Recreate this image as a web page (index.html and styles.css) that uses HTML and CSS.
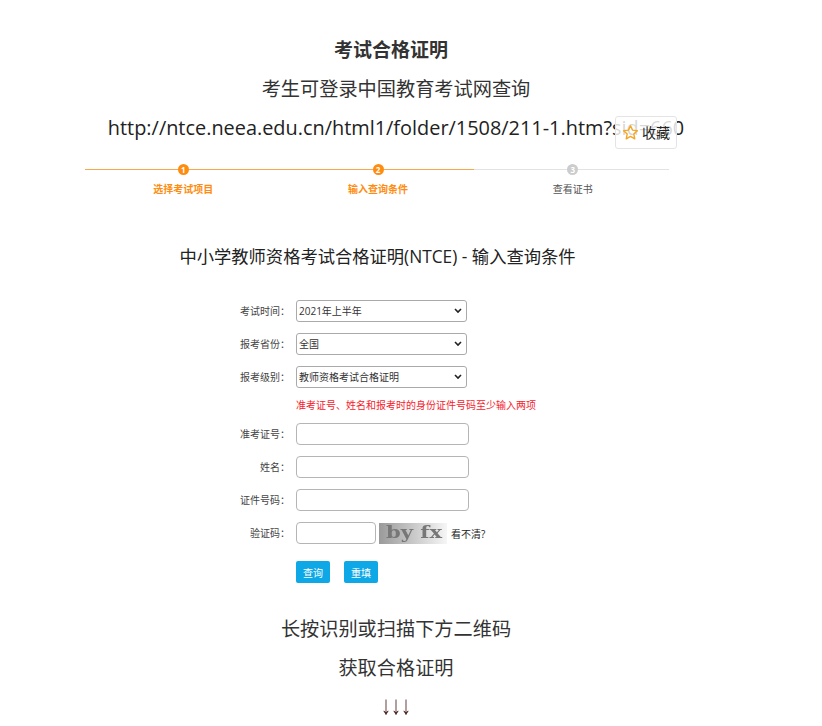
FILE: index.html
```html
<!DOCTYPE html>
<html>
 <head>
  <meta charset="utf-8">
  <title>考试合格证明</title>
  <link rel="stylesheet" href="styles.css">
 </head>
 <body>
  <div class="page">
   <h1 class="title">考试合格证明</h1>
   <p class="line sub">考生可登录中国教育考试网查询</p>
   <p class="line url">http://ntce.neea.edu.cn/html1/folder/1508/211-1.htm?sid=660</p>

   <div class="fav">
    <svg class="star" width="17" height="17" viewBox="0 0 24 24"><path d="M12 2.5l2.9 6.2 6.8.8-5 4.7 1.3 6.8-6-3.4-6 3.4 1.3-6.8-5-4.7 6.8-.8z" fill="none" stroke="#f5a623" stroke-width="2" stroke-linejoin="round"/></svg>
    <span class="fav-text">收藏</span>
   </div>

   <div class="steps">
    <div class="step done">
     <div class="dot">1</div>
     <div class="step-name">选择考试项目</div>
    </div>
    <div class="step done">
     <div class="dot">2</div>
     <div class="step-name">输入查询条件</div>
    </div>
    <div class="step">
     <div class="dot">3</div>
     <div class="step-name">查看证书</div>
    </div>
   </div>

   <h2 class="form-title">中小学教师资格考试合格证明(NTCE) - 输入查询条件</h2>

   <form class="query">
    <label class="lab">考试时间：</label>
    <select class="sel"><option>2021年上半年</option></select>
    <label class="lab">报考省份：</label>
    <select class="sel"><option>全国</option></select>
    <label class="lab">报考级别：</label>
    <select class="sel"><option>教师资格考试合格证明</option></select>
    <div class="tip">准考证号、姓名和报考时的身份证件号码至少输入两项</div>
    <label class="lab">准考证号：</label>
    <input class="txt" type="text">
    <label class="lab">姓名：</label>
    <input class="txt" type="text">
    <label class="lab">证件号码：</label>
    <input class="txt" type="text">
    <label class="lab">验证码：</label>
    <div class="code-row">
     <input class="txt code" type="text">
     <svg class="captcha" width="68" height="21" viewBox="0 0 68 21">
      <defs>
       <linearGradient id="capbg" x1="0" x2="1" y1="0" y2="0">
        <stop offset="0" stop-color="#9a9a9a"/>
        <stop offset="1" stop-color="#f6f6f6"/>
       </linearGradient>
       <filter id="capblur"><feGaussianBlur stdDeviation="0.5"/></filter>
      </defs>
      <rect width="68" height="21" fill="url(#capbg)"/>
      <text x="7" y="15" class="cap-text" textLength="56" lengthAdjust="spacingAndGlyphs" filter="url(#capblur)">by fx</text>
     </svg>
     <span class="refresh">看不清?</span>
    </div>
    <div class="btns">
     <button class="btn" type="button">查询</button>
     <button class="btn" type="button">重填</button>
    </div>
   </form>

   <p class="line scan">长按识别或扫描下方二维码</p>
   <p class="line get">获取合格证明</p>
   <p class="line arrows">↓↓↓</p>
  </div>
 </body>
</html>
```
FILE: styles.css
```css
body {
    margin: 0;
    background-color: #fff;
    color: #333;
    font-family: "Open Sans", "Noto Sans CJK SC", sans-serif;
    overflow: hidden;
}

.page {
    position: relative;
    width: 792px;
    height: 726px;
    padding-top: 38px;
    box-sizing: border-box;
    text-align: center;
}

.title {
    margin: 0 10px 0 0;
    font-size: 19px;
    line-height: 24px;
    font-weight: 700;
}

.line {
    margin: 0;
    font-size: 19.2px;
    line-height: 28px;
}

.sub {
    margin-top: 13px;
}

.url {
    margin-top: 11px;
    font-size: 19.9px;
    color: #222;
    white-space: nowrap;
}

.fav {
    position: absolute;
    left: 615px;
    top: 116px;
    width: 62px;
    height: 33px;
    box-sizing: border-box;
    border: 1px solid #e4e4e4;
    border-radius: 3px;
    background: rgba(255, 255, 255, 0.82);
    display: flex;
    align-items: center;
    justify-content: center;
    gap: 3px;
    font-size: 14px;
    color: #222;
}

.fav-text {
    margin-bottom: 2px;
}

.steps {
    display: flex;
    width: 584px;
    margin: 22px 0 0 85px;
}

.step {
    flex: 1;
    padding-left: 2px;
    display: flex;
    flex-direction: column;
    align-items: center;
    background: linear-gradient(#e2e2e2, #e2e2e2) no-repeat 0 5px / 100% 1px;
}

.step.done {
    background-image: linear-gradient(#f9a94a, #f9a94a);
}

.dot {
    width: 11px;
    height: 11px;
    border-radius: 50%;
    background: #ccc;
    color: #fff;
    font-size: 8px;
    line-height: 11px;
    font-weight: 700;
}

.step.done .dot {
    background: #ff8c0f;
}

.step-name {
    margin-top: 7px;
    font-size: 10px;
    line-height: 14px;
    color: #555;
}

.step.done .step-name {
    color: #ff8c0f;
    font-weight: 700;
}

.form-title {
    margin: 48px 37px 0 0;
    font-size: 17.3px;
    line-height: 26px;
    font-weight: 400;
    color: #222;
}

.query {
    display: grid;
    grid-template-columns: 290px 173px;
    column-gap: 6px;
    row-gap: 11px;
    margin-top: 30px;
    text-align: left;
    align-items: center;
}

.lab {
    grid-column: 1;
    text-align: right;
    font-size: 10px;
    line-height: 22px;
    color: #444;
}

.sel {
    grid-column: 2;
    appearance: none;
    width: 171px;
    height: 22px;
    box-sizing: border-box;
    padding: 0 0 0 2px;
    border: 1px solid #aaa;
    border-radius: 3px;
    background: #fff url("data:image/svg+xml,%3Csvg xmlns='http://www.w3.org/2000/svg' width='8' height='6'%3E%3Cpath d='M1 1l3 3 3-3' fill='none' stroke='%23222' stroke-width='1.6'/%3E%3C/svg%3E") no-repeat right 4px center;
    font-family: inherit;
    font-size: 10px;
    color: #333;
}

.tip {
    grid-column: 2;
    white-space: nowrap;
    height: 14px;
    margin-top: -1px;
    font-size: 10px;
    line-height: 14px;
    color: #f5222d;
}

.txt {
    grid-column: 2;
    width: 173px;
    height: 22px;
    box-sizing: border-box;
    padding: 0 4px;
    border: 1px solid #b5b5b5;
    border-radius: 4px;
    background: #fff;
}

.code-row {
    grid-column: 2;
    display: flex;
    align-items: center;
    gap: 3px;
    white-space: nowrap;
}

.txt.code {
    width: 80px;
    flex: none;
}

.captcha {
    display: block;
    flex: none;
}

.cap-text {
    font-family: "DejaVu Serif", serif;
    font-size: 16px;
    font-weight: 700;
    fill: #777;
}

.refresh {
    margin-left: 1px;
    font-size: 10px;
    color: #222;
}

.btns {
    grid-column: 2;
    display: flex;
    gap: 14px;
    margin-top: 6px;
}

.btn {
    width: 34px;
    height: 22px;
    padding: 0;
    border: 0;
    border-radius: 2px;
    background: #0ea8e6;
    color: #fff;
    font-family: inherit;
    font-size: 10px;
}

.scan {
    margin-top: 32px;
}

.get {
    margin-top: 11px;
}

.arrows {
    margin-top: 9px;
    font-family: "Liberation Sans", sans-serif;
    font-size: 20px;
    color: #4a2020;
    transform: scaleY(1.3);
}
```
